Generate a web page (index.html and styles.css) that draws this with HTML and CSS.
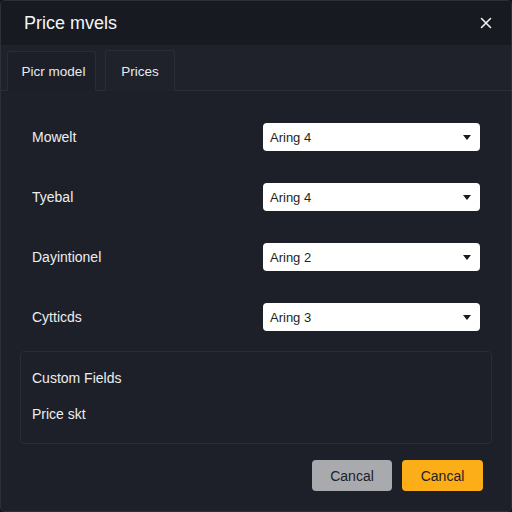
FILE: index.html
```html
<!DOCTYPE html>
<html>
<head>
<meta charset="utf-8">
<link rel="stylesheet" href="styles.css">
</head>
<body>
<div class="dialog">
  <div class="header">
    <div class="title">Price mvels</div>
    <svg class="close" width="12" height="12" viewBox="0 0 12 12"><path d="M1.5 1.5L10.5 10.5M10.5 1.5L1.5 10.5" stroke="#f2f2f2" stroke-width="1.6" stroke-linecap="round"/></svg>
  </div>
  <div class="tabbar">
    <div class="tab tab-a">Picr model</div>
    <div class="tab tab-b">Prices</div>
  </div>
  <div class="body">
    <div class="row"><span class="label">Mowelt</span><div class="select"><span>Aring 4</span><span class="caret"></span></div></div>
    <div class="row"><span class="label">Tyebal</span><div class="select"><span>Aring 4</span><span class="caret"></span></div></div>
    <div class="row"><span class="label">Dayintionel</span><div class="select"><span>Aring 2</span><span class="caret"></span></div></div>
    <div class="row"><span class="label">Cytticds</span><div class="select"><span>Aring 3</span><span class="caret"></span></div></div>
    <div class="fields">
      <div class="field">Custom Fields</div>
      <div class="field">Price skt</div>
    </div>
    <div class="footer">
      <button class="btn btn-gray">Cancal</button>
      <button class="btn btn-yellow">Cancal</button>
    </div>
  </div>
</div>
</body>
</html>
```
FILE: styles.css
```css
html, body {
  margin: 0;
  padding: 0;
  background: #14161c;
}
body {
  font-family: "Liberation Sans", Arial, sans-serif;
  color: #eceef1;
}
.dialog {
  width: 512px;
  height: 512px;
  box-sizing: border-box;
  border: 1px solid #2c3038;
  border-radius: 5px;
  background: #1d2028;
  display: flex;
  flex-direction: column;
  overflow: hidden;
}
.header {
  height: 44px;
  flex: none;
  background: #171a21;
  display: flex;
  align-items: center;
  justify-content: space-between;
  padding: 0 19px 0 23px;
}
.title {
  font-size: 18px;
  color: #f4f5f7;
}
.close {
  display: block;
}
.tabbar {
  height: 46px;
  flex: none;
  box-sizing: border-box;
  background: #1f222a;
  border-bottom: 1px solid #2a2e36;
  display: flex;
  align-items: flex-end;
  padding-left: 6px;
  gap: 9px;
}
.tab {
  height: 40px;
  box-sizing: border-box;
  border: 1px solid #292d35;
  border-bottom: none;
  border-radius: 3px 3px 0 0;
  display: flex;
  align-items: center;
  justify-content: center;
  font-size: 13.5px;
  color: #e8eaee;
  margin-bottom: -1px;
}
.tab-a {
  width: 89px;
  background: #1c1f27;
  padding-left: 4px;
}
.tab-b {
  width: 70px;
  background: #1f222a;
  height: 41px;
}
.body {
  flex: 1;
  padding: 32px 0 0 0;
  display: flex;
  flex-direction: column;
}
.row {
  height: 28px;
  display: flex;
  align-items: center;
  justify-content: space-between;
  padding: 0 31px 0 31px;
  margin-bottom: 32px;
}
.row:nth-child(4) {
  margin-bottom: 20px;
}
.label {
  font-size: 14px;
  color: #eceef1;
}
.select {
  width: 217px;
  height: 28px;
  box-sizing: border-box;
  background: #ffffff;
  border-radius: 4px;
  display: flex;
  align-items: center;
  justify-content: space-between;
  padding: 0 9px 0 7px;
  font-size: 13px;
  color: #1e1f23;
}
.caret {
  width: 0;
  height: 0;
  border-left: 4px solid transparent;
  border-right: 4px solid transparent;
  border-top: 5px solid #1a1b1f;
}
.fields {
  margin: 0 19px 0 19px;
  border: 1px solid #282c34;
  border-radius: 4px;
  padding: 16px 11px 19px 11px;
  display: flex;
  flex-direction: column;
  gap: 16px;
}
.field {
  font-size: 14px;
  line-height: 20px;
  color: #eceef1;
}
.footer {
  display: flex;
  justify-content: flex-end;
  gap: 10px;
  padding: 16px 28px 0 0;
}
.btn {
  height: 31px;
  border: none;
  border-radius: 4px;
  font-family: "Liberation Sans", Arial, sans-serif;
  font-size: 14px;
  color: #1f2024;
  padding: 0;
}
.btn-gray {
  width: 80px;
  background: #a9aaae;
}
.btn-yellow {
  width: 81px;
  background: #fcae18;
}
```
